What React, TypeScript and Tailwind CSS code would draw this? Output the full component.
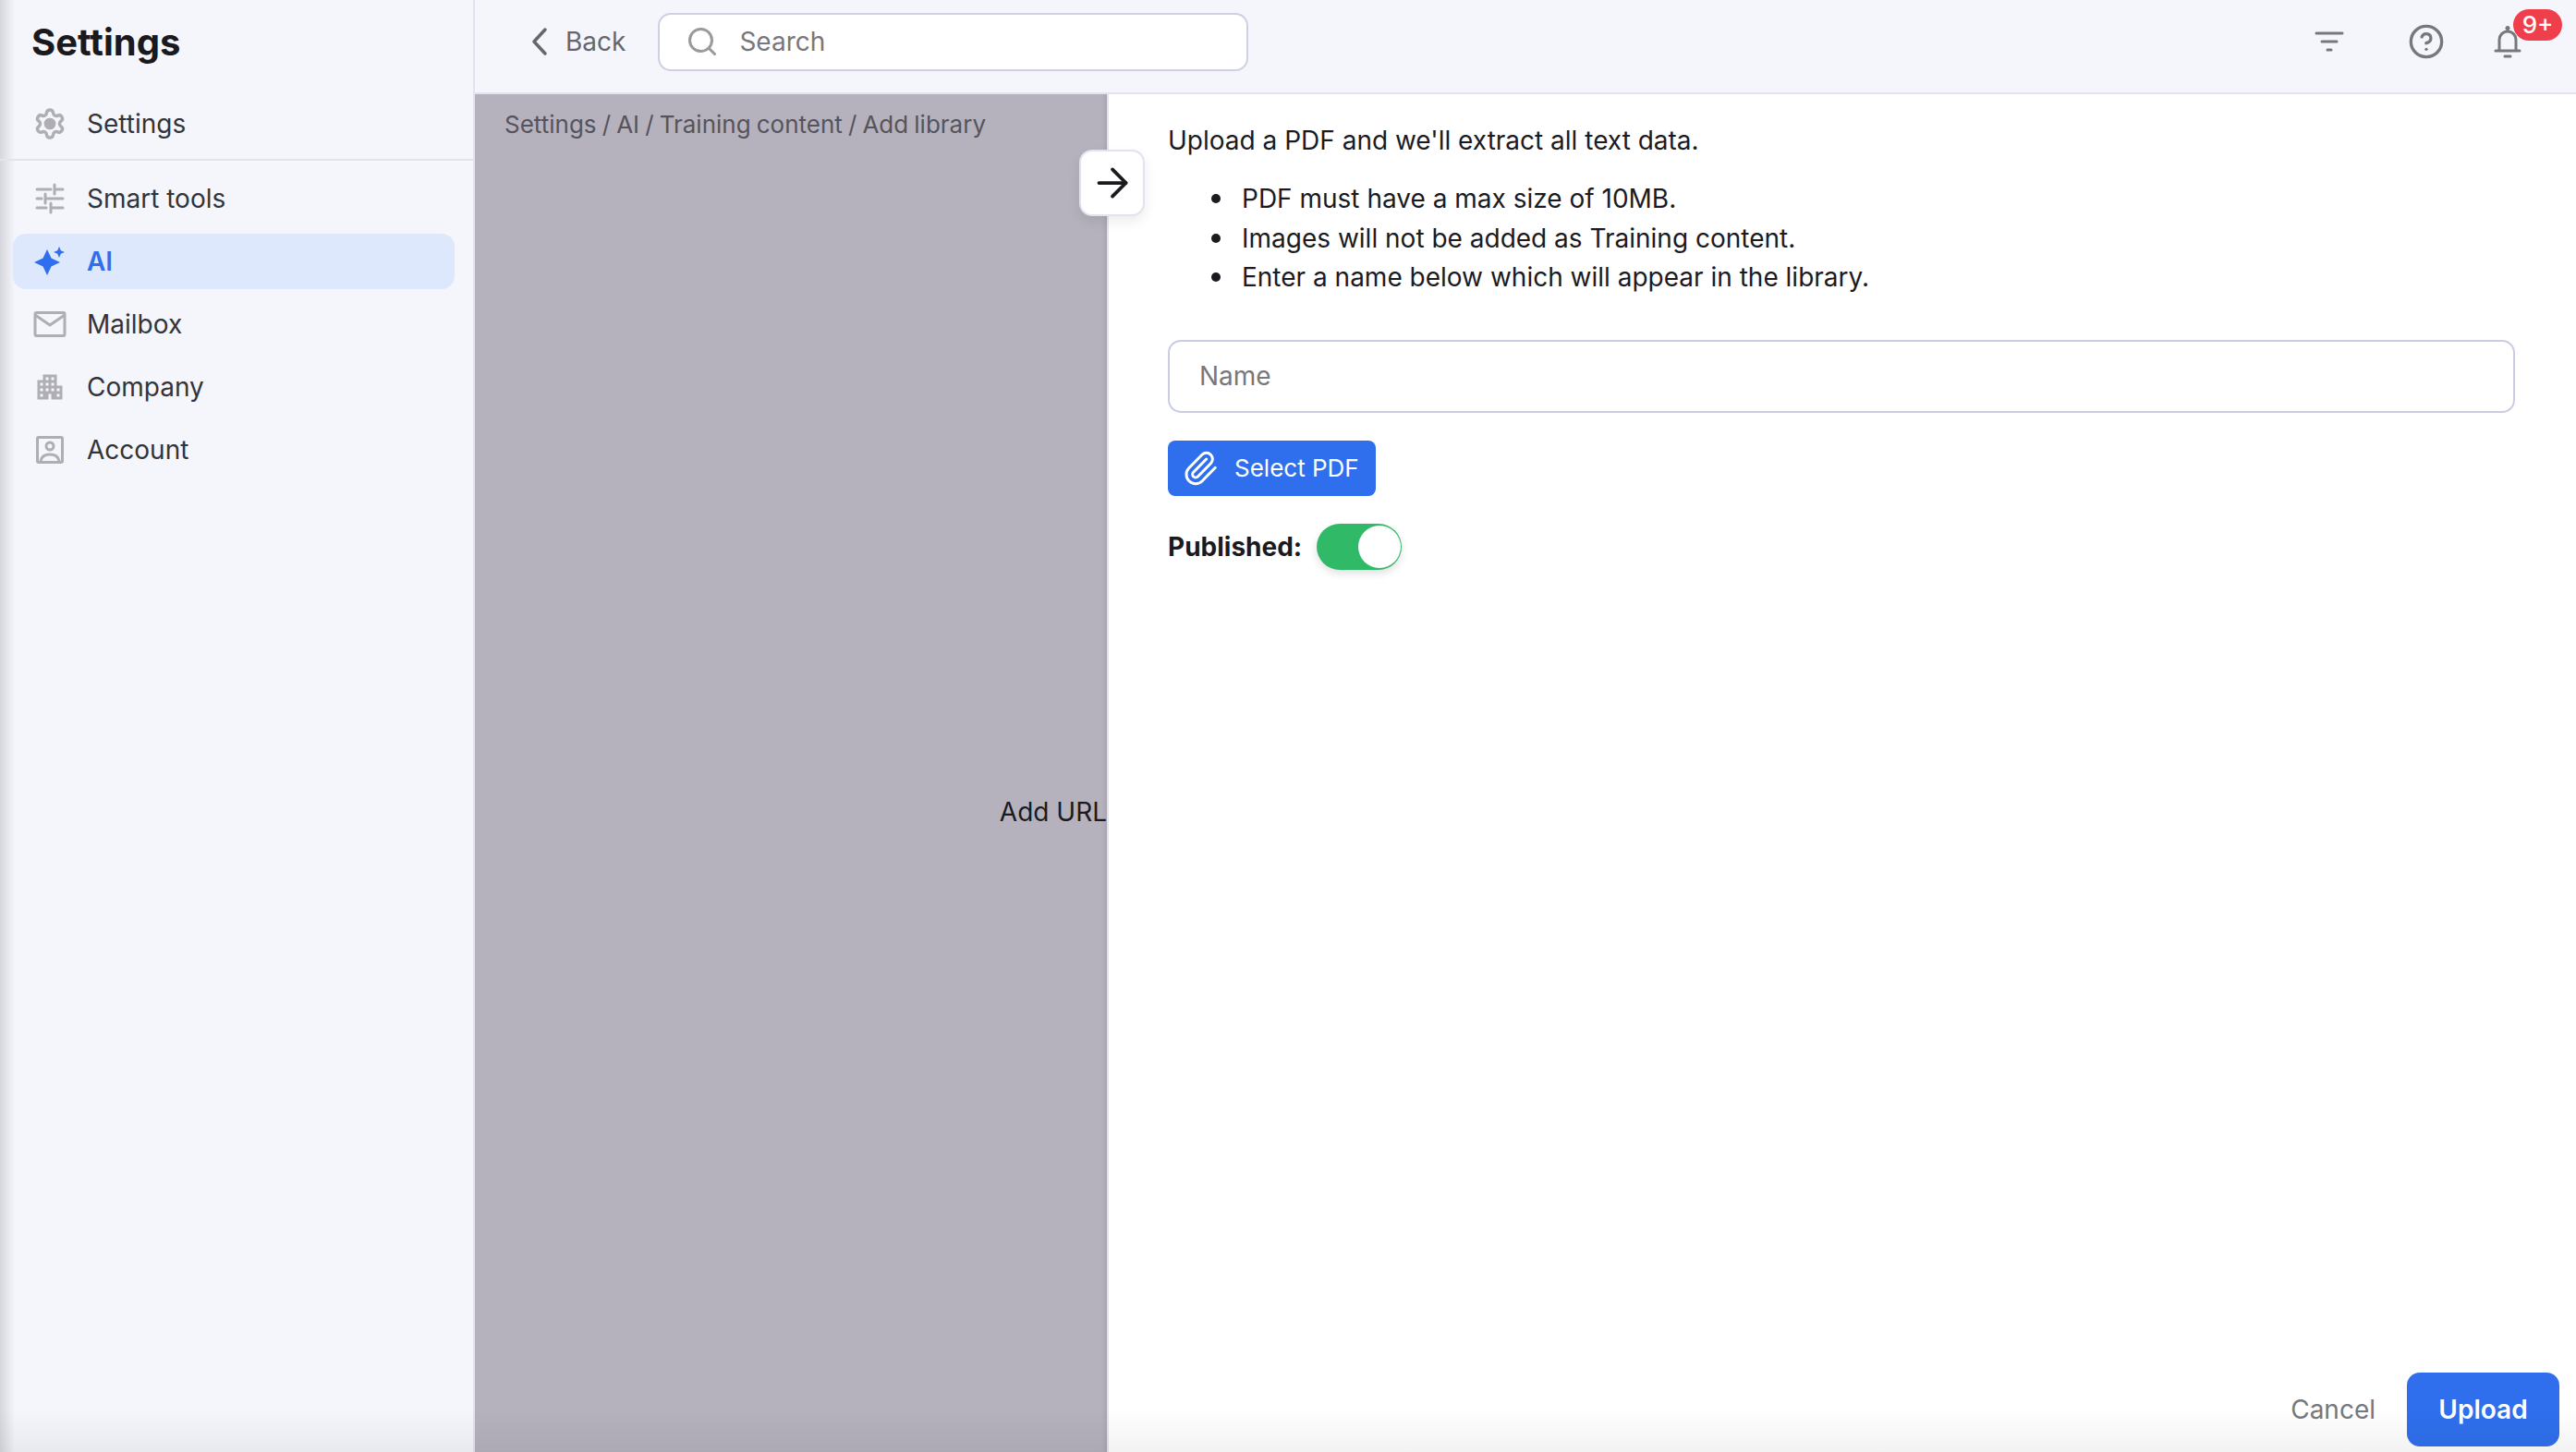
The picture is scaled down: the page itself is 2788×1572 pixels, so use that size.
import { ArrowRight, CircleHelp, Paperclip, Search, Settings } from "lucide-react";
import { MdApartment } from "react-icons/md";

const navItems = [
  { label: "Smart tools", icon: <TuneIcon /> },
  { label: "AI", active: true, icon: <Sparkle /> },
  { label: "Mailbox", icon: <MailIcon /> },
  { label: "Company", icon: <MdApartment size={40} /> },
  { label: "Account", icon: <AccountIcon /> },
];

const rules = [
  "PDF must have a max size of 10MB.",
  "Images will not be added as Training content.",
  "Enter a name below which will appear in the library.",
];

function Sparkle() {
  return (
    <svg width="36" height="36" viewBox="0 0 36 36" fill="#2f6fed">
      <path d="M15 5l4.500 9.500L29 19l-9.500 4.500L15 33l-4.500-9.500L1 19l9.500-4.500z" />
      <path d="M28 2l1.800 4.200L34 8l-4.200 1.800L28 14l-1.800-4.200L22 8l4.200-1.800z" />
    </svg>
  );
}

function TuneIcon() {
  return (
    <svg width="36" height="36" viewBox="0 0 36 36" fill="none" stroke="#aeaeb4" strokeWidth="3" strokeLinecap="round">
      <path d="M4 8h15M23 3v10M23 8h9M4 18h5M13 13v10M13 18h19M4 28h10M19 23v10M19 28h13" />
    </svg>
  );
}

function MailIcon() {
  return (
    <svg width="36" height="30" viewBox="0 0 36 30" fill="none" stroke="#aeaeb4" strokeWidth="3" strokeLinejoin="round">
      <rect x="2" y="2.500" width="32" height="25" rx="1.500" />
      <path d="M2 5l16 11L34 5" />
    </svg>
  );
}

function AccountIcon() {
  return (
    <svg width="32" height="32" viewBox="0 0 32 32" fill="none" stroke="#aeaeb4" strokeWidth="3" strokeLinejoin="round">
      <rect x="2.500" y="2.500" width="27" height="27" rx="1.500" />
      <circle cx="16" cy="12" r="4" />
      <path d="M6 28c1-5 5-7 10-7s9 2 10 7" />
    </svg>
  );
}

function ChevronIcon() {
  return (
    <svg width="20" height="32" viewBox="0 0 20 32" fill="none" stroke="#66676c" strokeWidth="3.500" strokeLinecap="round" strokeLinejoin="round">
      <path d="M17 3 5 16l12 13" />
    </svg>
  );
}

function FilterIcon() {
  return (
    <svg width="32" height="24" viewBox="0 0 32 24" fill="none" stroke="#77787c" strokeWidth="3" strokeLinecap="round">
      <path d="M2 3h28M8 12h16M14 21h4" />
    </svg>
  );
}

function BellIcon() {
  return (
    <svg width="30" height="38" viewBox="0 0 30 38" fill="none" stroke="#77787c" strokeWidth="3" strokeLinecap="round">
      <circle cx="15" cy="4.500" r="2.500" fill="#77787c" stroke="none" />
      <path d="M6 29V17a9 9 0 0 1 18 0v12M2 29h26M12 35h6" />
    </svg>
  );
}

export default function App() {
  return (
    <div className="relative flex h-[1572px] w-[2788px] overflow-hidden bg-white font-['Inter',sans-serif] text-[28px] text-[#1b1b1f]">
      <aside className="flex w-[512px] shrink-0 flex-col bg-[linear-gradient(90deg,#d6d7dc_0,#f4f6fb_16px)]">
        <h1 className="px-[34px] pt-[22px] text-[40px] leading-[48px] font-bold text-[#1a1a1e]">Settings</h1>
        <div className="mt-[33px] flex h-[71px] items-center gap-[22px] border-b-2 border-[#e2e3ef] pb-[8px] pl-[36px] text-[#33343a]">
          <span className="flex w-[36px] justify-center text-[#aeaeb4]">
            <Settings size={38} strokeWidth={2.300}>
              <circle cx="12" cy="12" r="3" fill="currentColor" />
            </Settings>
          </span>
          Settings
        </div>
        <nav className="flex flex-col gap-[8px] pt-[11px] pr-[20px] pl-[14px]">
          {navItems.map((item) => (
            <div
              key={item.label}
              className={
                item.active
                  ? "flex h-[60px] items-center gap-[22px] rounded-[14px] bg-[#deE8fc] pl-[22px] font-semibold text-[#2f6fed]"
                  : "flex h-[60px] items-center gap-[22px] pl-[22px] text-[#33343a]"
              }
            >
              <span className={item.active ? "flex w-[36px] justify-center" : "flex w-[36px] justify-center text-[#aeaeb4]"}>{item.icon}</span>
              {item.label}
            </div>
          ))}
        </nav>
      </aside>

      <div className="flex min-w-0 flex-1 flex-col border-l-2 border-[#e2e3ef]">
        <header className="flex h-[102px] shrink-0 items-center border-b-2 border-[#e2e3ef] bg-[#f4f6fb] pb-[10px]">
          <div className="ml-[59px] flex items-center gap-[19px] text-[#66676c]">
            <ChevronIcon />
            Back
          </div>
          <div className="ml-[35px] flex h-[63px] w-[639px] items-center gap-[22px] rounded-[14px] border-2 border-[#cfd0e3] bg-white pl-[28px] text-[#77787c]">
            <Search size={36} strokeWidth={2} className="text-[#99999e]" />
            Search
          </div>
          <div className="ml-auto flex items-center gap-[69px] pr-[59px] text-[#77787c]">
            <FilterIcon />
            <CircleHelp size={40} strokeWidth={2} />
            <div className="relative -ml-[16px] flex">
              <BellIcon />
              <span className="absolute -top-[16px] left-[21px] flex h-[34px] w-[53px] items-center justify-center rounded-full bg-[#ef3f4c] text-[26px] leading-none font-medium text-white">
                9+
              </span>
            </div>
          </div>
        </header>

        <div className="flex min-h-0 flex-1">
          <section className="relative flex w-[684px] shrink-0 flex-col bg-[#b5b2bd] shadow-[inset_-6px_0_6px_-6px_rgba(0,0,0,0.15)]">
            <p className="px-[32px] pt-[17px] text-[26px] leading-[32px] text-[#55545c] [word-spacing:-1.2px]">Settings / AI / Training content / Add library</p>
            <p className="mt-[711px] text-right leading-[34px] text-[#1b1b1f]">Add URL</p>
            <button className="absolute top-[60px] -right-[41px] z-10 flex h-[72px] w-[71px] items-center justify-center rounded-[14px] border-2 border-[#e2e3ef] bg-white text-[#1b1b1f] shadow-[0_6px_14px_rgba(0,0,0,0.08)]">
              <ArrowRight size={50} strokeWidth={1.800} />
            </button>
          </section>

          <main className="flex min-w-0 flex-1 flex-col border-l-2 border-[#e2e3ef] bg-white pr-[18px] pl-[64px]">
            <p className="pt-[33px] leading-[34px]">Upload a PDF and we'll extract all text data.</p>
            <ul className="mt-[25px] pl-[47px] leading-[42.500px]">
              {rules.map((rule) => (
                <li key={rule} className="flex items-center gap-[23px]">
                  <span className="h-[10px] w-[10px] rounded-full bg-[#1b1b1f]" />
                  {rule}
                </li>
              ))}
            </ul>
            <div className="mt-[46px] mr-[48px] flex h-[79px] items-center rounded-[14px] border-2 border-[#cacde0] pl-[32px] text-[#77787c]">Name</div>
            <button className="mt-[30px] flex h-[60px] w-[225px] items-center gap-[17px] rounded-[8px] bg-[#2f6fed] pl-[15px] text-[26px] text-white">
              <Paperclip size={40} strokeWidth={1.800} />
              Select PDF
            </button>
            <div className="mt-[30px] flex items-center gap-[16px] font-bold">
              Published:
              <div className="flex h-[50px] w-[92px] items-center justify-end rounded-full bg-[#30ba68] pr-[1px] shadow-[0_4px_8px_rgba(0,0,0,0.12)]">
                <div className="h-[46px] w-[46px] rounded-full bg-white" />
              </div>
            </div>
            <div className="mt-auto flex items-center justify-end gap-[34px] pb-[6px]">
              <span className="text-[#77787c]">Cancel</span>
              <button className="flex h-[80px] w-[165px] items-center justify-center rounded-[14px] bg-[#2f6fed] font-semibold text-white">Upload</button>
            </div>
          </main>
        </div>
      </div>
      <div className="pointer-events-none absolute inset-x-0 bottom-0 h-[48px] bg-gradient-to-b from-black/0 to-black/[0.05]" />
    </div>
  );
}
